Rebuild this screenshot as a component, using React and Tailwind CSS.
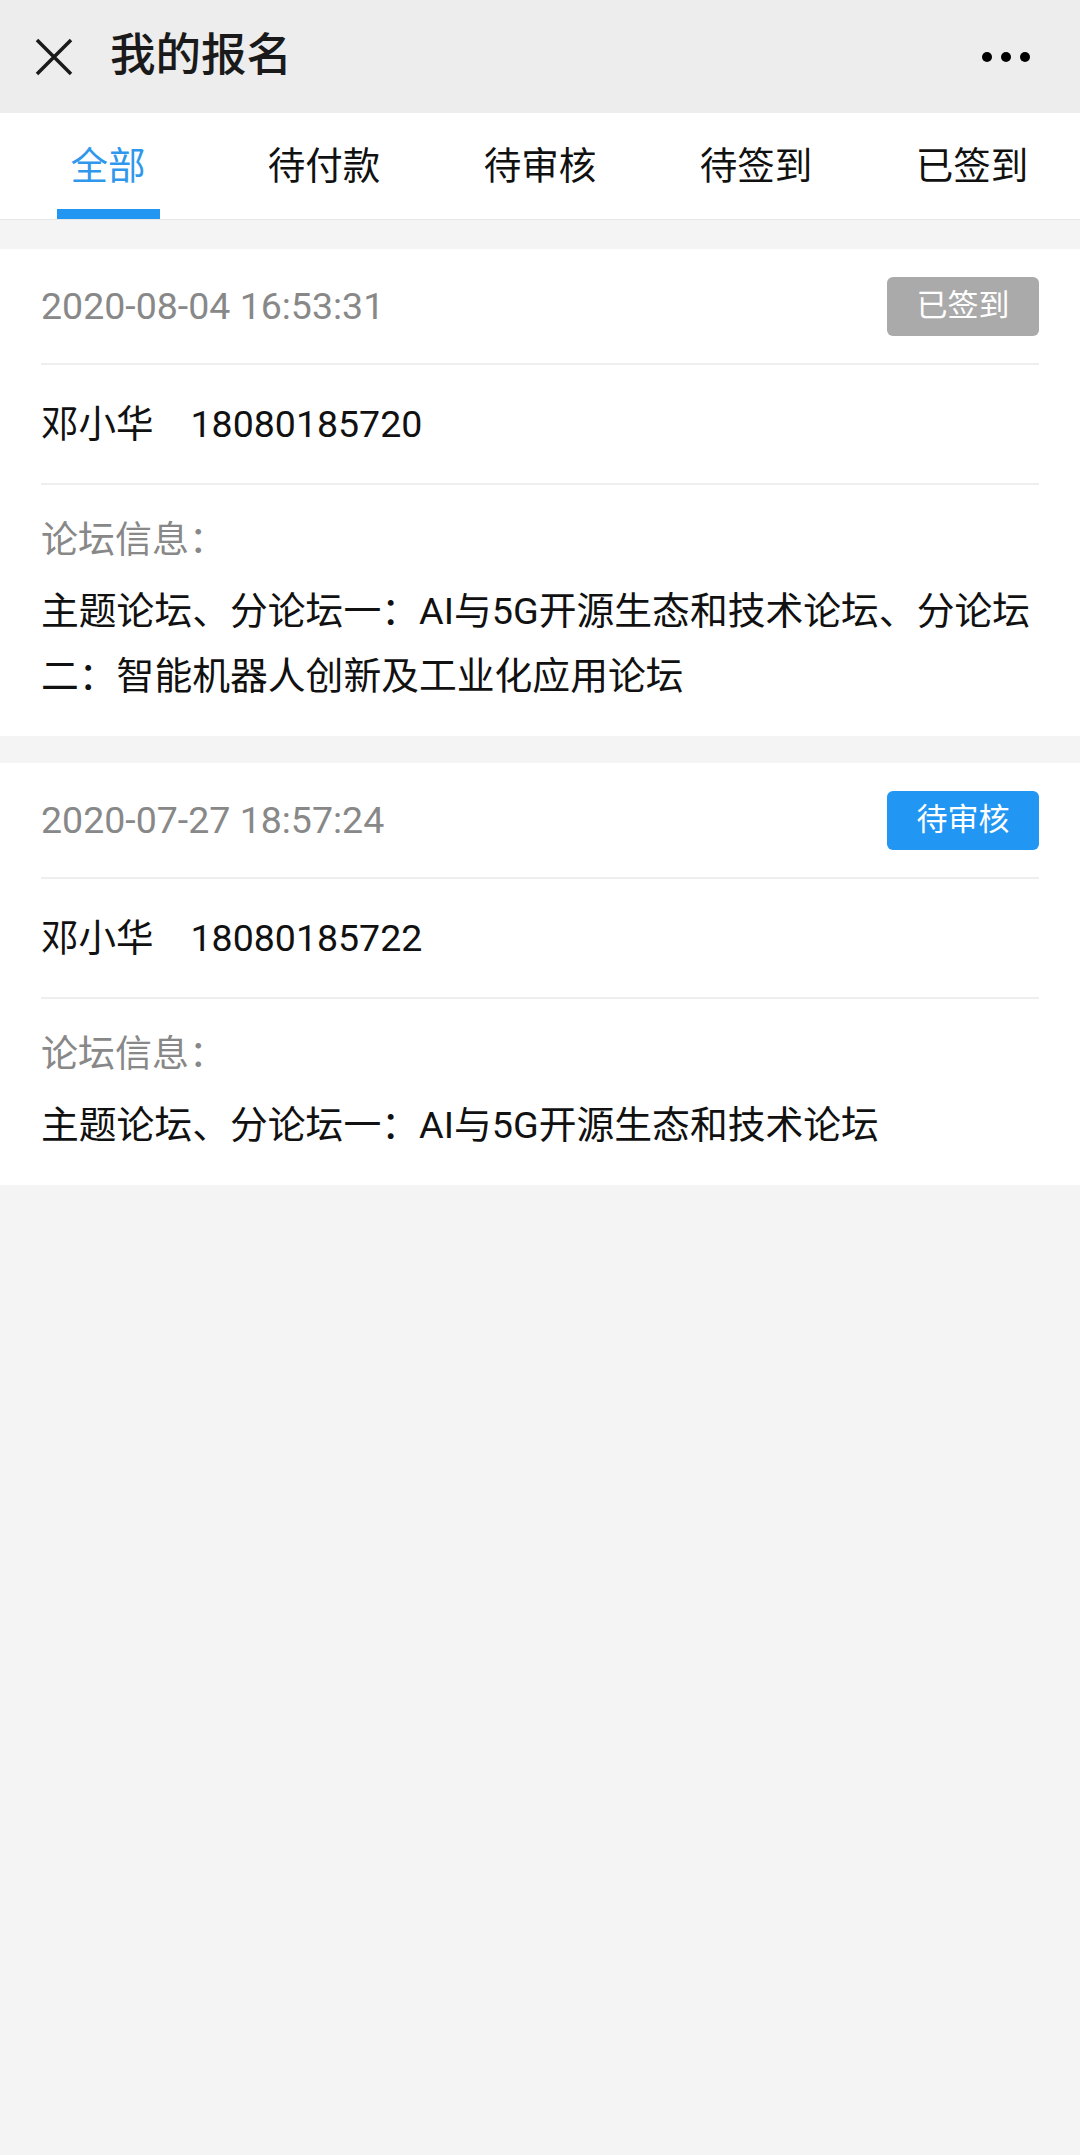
import React from "react";

const tabs = ["全部", "待付款", "待审核", "待签到", "已签到"];

const orders = [
  {
    time: "2020-08-04 16:53:31",
    status: "已签到",
    statusClass: "bg-[#aaaaaa]",
    name: "邓小华",
    phone: "18080185720",
    forums: "主题论坛、分论坛一：AI与5G开源生态和技术论坛、分论坛二：智能机器人创新及工业化应用论坛",
  },
  {
    time: "2020-07-27 18:57:24",
    status: "待审核",
    statusClass: "bg-[#2196f3]",
    name: "邓小华",
    phone: "18080185722",
    forums: "主题论坛、分论坛一：AI与5G开源生态和技术论坛",
  },
];

const font = { fontFamily: 'Roboto, "Noto Sans CJK SC", sans-serif' };

const OrderCard = ({ order }) => (
  <article className="bg-white px-[41px]">
    <div className="flex h-[116px] items-center justify-between border-b-2 border-[#eeeeee]">
      <span className="text-[37.5px] text-[#888888]">{order.time}</span>
      <span className={`flex h-[59px] w-[152px] items-center justify-center rounded-[6px] text-[31px] text-white ${order.statusClass}`}>
        {order.status}
      </span>
    </div>
    <div className="flex h-[120px] items-center border-b-2 border-[#eeeeee] text-[37.5px] text-[#111111]">
      <span>{order.name}</span>
      <span className="ml-[37px]">{order.phone}</span>
    </div>
    <div className="pt-[26px] pb-[27px]">
      <p className="text-[37px] leading-[60px] text-[#888888]">论坛信息：</p>
      <p className="mt-[8px] text-[37.8px] leading-[65px] text-[#111111]">{order.forums}</p>
    </div>
  </article>
);

export default function App() {
  return (
    <div className="min-h-[2155px] w-[1080px] bg-[#f4f4f4]" style={font}>
      <header className="flex h-[113px] items-center bg-[#ededed] pl-[35px] pr-[50px]">
        <svg viewBox="0 0 38 38" className="h-[38px] w-[38px]" fill="none" stroke="#1a1a1a" strokeWidth="3.5" aria-hidden="true">
          <path d="M2 2l34 34M36 2L2 36" />
        </svg>
        <h1 className="ml-[37px] text-[45.5px] font-medium text-[#1a1a1a]">我的报名</h1>
        <div className="ml-auto flex items-center gap-[9px]">
          <span className="h-[10px] w-[10px] rounded-full bg-black" />
          <span className="h-[10px] w-[10px] rounded-full bg-black" />
          <span className="h-[10px] w-[10px] rounded-full bg-black" />
        </div>
      </header>

      <nav className="grid h-[107px] grid-cols-5 border-b border-[#e6e6e6] bg-white">
        {tabs.map((tab, i) => (
          <div key={tab} className="relative flex items-center justify-center">
            <span className={`text-[37.5px] ${i === 0 ? "text-[#2f97ec]" : "text-[#111111]"}`}>{tab}</span>
            {i === 0 && <span className="absolute bottom-0 h-[10px] w-[103px] bg-[#2196f3]" />}
          </div>
        ))}
      </nav>

      <div className="flex flex-col gap-[27px] pt-[29px]">
        {orders.map((order) => (
          <OrderCard key={order.time} order={order} />
        ))}
      </div>
    </div>
  );
}
